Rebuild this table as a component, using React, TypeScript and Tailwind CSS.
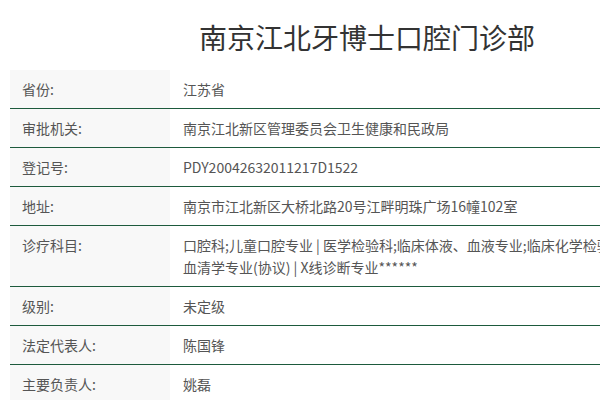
import React from "react";

const rows: { label: string; value: React.ReactNode }[] = [
  { label: "省份:", value: "江苏省" },
  { label: "审批机关:", value: "南京江北新区管理委员会卫生健康和民政局" },
  { label: "登记号:", value: "PDY20042632011217D1522" },
  { label: "地址:", value: "南京市江北新区大桥北路20号江畔明珠广场16幢102室" },
  {
    label: "诊疗科目:",
    value: (
      <>
        <span className="block whitespace-nowrap">口腔科;儿童口腔专业 | 医学检验科;临床体液、血液专业;临床化学检验专业;临床免疫、</span>
        <span className="block whitespace-nowrap">血清学专业(协议) | X线诊断专业******</span>
      </>
    ),
  },
  { label: "级别:", value: "未定级" },
  { label: "法定代表人:", value: "陈国锋" },
  { label: "主要负责人:", value: "姚磊" },
];

export default function App() {
  return (
    <div
      className="w-[600px] h-[400px] overflow-hidden bg-white"
      style={{ fontFamily: '"Noto Sans CJK SC", "Open Sans", sans-serif' }}
    >
      <div className="w-[714px] ml-[10px]">
        <h1 className="h-[70px] pt-[19px] text-center text-[28px] leading-[36px] text-[#333] font-normal">
          南京江北牙博士口腔门诊部
        </h1>
        <div className="flex flex-col">
          {rows.map((r, i) => (
            <div
              key={i}
              className="flex border-b border-[#1d5a3d] text-[14px] leading-[22px] text-[#555]"
            >
              <div className="w-[160px] shrink-0 bg-[#f8f8f8] px-[12px] py-[8px]">{r.label}</div>
              <div className="flex-1 px-[13px] py-[8px]">{r.value}</div>
            </div>
          ))}
        </div>
      </div>
    </div>
  );
}
